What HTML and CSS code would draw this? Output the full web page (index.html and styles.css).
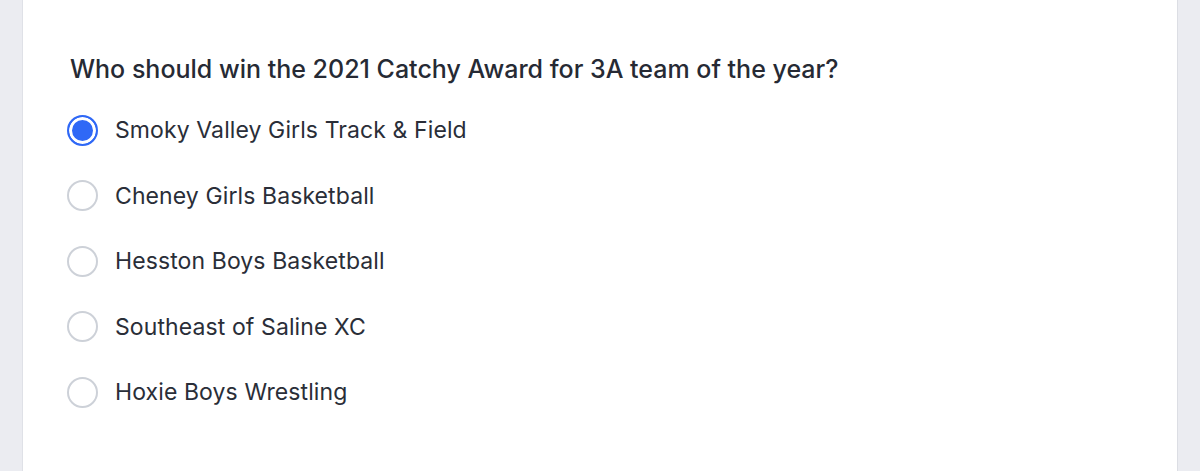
FILE: index.html
```html
<!DOCTYPE html>
<html lang="en">
<head>
<meta charset="utf-8">
<title>2021 Catchy Award – 3A team of the year</title>
<link rel="stylesheet" href="styles.css">
</head>
<body>
  <main class="panel">
    <form class="question">
      <h2 class="question-title">Who should win the 2021 Catchy Award for 3A team of the year?</h2>
      <div class="choices">
        <label class="choice">
          <input type="radio" name="team" checked>
          <span class="dot"></span>
          <span class="choice-text">Smoky Valley Girls Track &amp; Field</span>
        </label>
        <label class="choice">
          <input type="radio" name="team">
          <span class="dot"></span>
          <span class="choice-text">Cheney Girls Basketball</span>
        </label>
        <label class="choice">
          <input type="radio" name="team">
          <span class="dot"></span>
          <span class="choice-text">Hesston Boys Basketball</span>
        </label>
        <label class="choice">
          <input type="radio" name="team">
          <span class="dot"></span>
          <span class="choice-text">Southeast of Saline XC</span>
        </label>
        <label class="choice">
          <input type="radio" name="team">
          <span class="dot"></span>
          <span class="choice-text">Hoxie Boys Wrestling</span>
        </label>
      </div>
    </form>
  </main>
</body>
</html>
```

FILE: styles.css
```css
html, body {
  margin: 0;
  height: 100%;
}

body {
  background: #ebecf1;
  font-family: Inter, "Noto Sans", "Liberation Sans", sans-serif;
  color: #272b35;
  overflow: hidden;
}

.panel {
  box-sizing: border-box;
  margin-left: 22px;
  width: 1156px;
  height: 100%;
  background: #ffffff;
  border-left: 1px solid #dfe1e7;
  border-right: 1px solid #dcdee4;
}

.question {
  padding: 53px 0 0 47px;
}

.question-title {
  margin: 0;
  font-size: 25px;
  line-height: 32px;
  font-weight: 500;
  color: #262a34;
}

.choices {
  display: flex;
  flex-direction: column;
  gap: 33.5px;
  margin-top: 29px;
}

.choice {
  display: flex;
  align-items: center;
  height: 32px;
  cursor: pointer;
}

.choice input {
  position: absolute;
  opacity: 0;
  pointer-events: none;
}

.dot {
  box-sizing: border-box;
  flex: none;
  width: 31px;
  height: 31px;
  margin-left: -3px;
  border-radius: 50%;
  border: 2px solid #cdd1d8;
  background: #ffffff;
}

.choice input:checked + .dot {
  border: 2px solid #2f68f6;
  background: #2f68f6;
  box-shadow: inset 0 0 0 3px #ffffff;
}

.choice-text {
  margin-left: 17px;
  font-size: 23px;
  line-height: 32px;
  letter-spacing: 0.1px;
  color: #2a2e38;
}
```
